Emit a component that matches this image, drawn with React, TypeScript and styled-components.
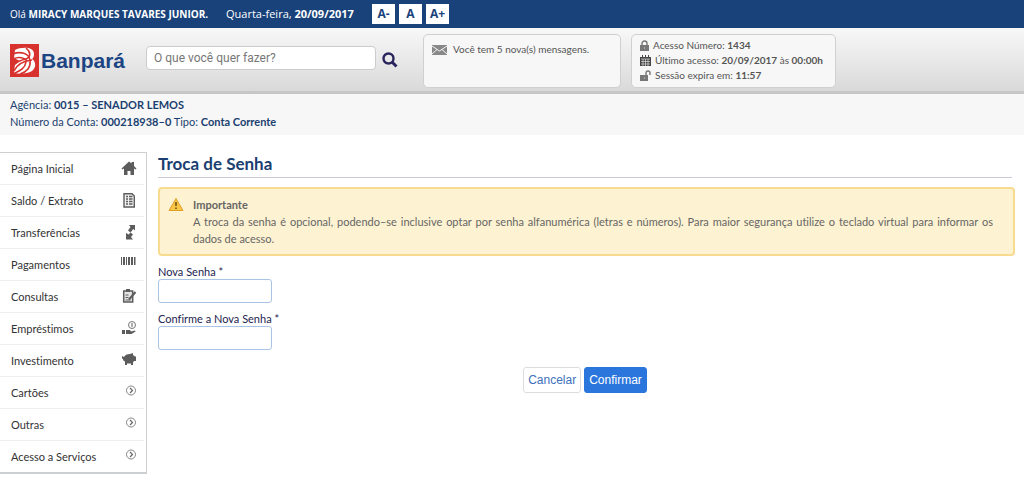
import React from "react";
import styled, { createGlobalStyle } from "styled-components";

const Global = createGlobalStyle`
  *, *::before, *::after { box-sizing: border-box; }
  body {
    margin: 0;
    background: #fff;
    color: #444;
    font: 11px/16px Lato, "Open Sans", sans-serif;
    font-variant-ligatures: none;
  }
  h1, p, ul { margin: 0; padding: 0; }
  ul { list-style: none; }
  svg { display: block; flex: none; }
`;

const TopBar = styled.div`
  display: flex;
  align-items: center;
  height: 28px;
  padding: 0 10px;
  color: #fff;
  background: #19427a;
  font-family: "Open Sans", sans-serif;
`;
const Greeting = styled.span`
  width: 216px;
  white-space: nowrap;
  font-size: 10px;
`;
const Today = styled.span`
  width: 146px;
  white-space: nowrap;
`;
const FontSizes = styled.div`
  display: flex;
  gap: 4px;
`;
const FontButton = styled.button`
  width: 23px;
  height: 20px;
  padding: 0;
  border: 0;
  background: #fff;
  color: #19427a;
  font: bold 12px/20px "Open Sans", sans-serif;
`;

const Header = styled.header`
  display: flex;
  align-items: flex-start;
  height: 66px;
  padding: 6px 10px 0;
  border-bottom: 3px solid #c6c6c6;
  background: linear-gradient(#f8f8f8, #d9d9d9);
`;
const Logo = styled.a`
  display: flex;
  align-items: center;
  gap: 2px;
  width: 136px;
  padding-top: 10px;
  color: #1c4583;
  text-decoration: none;
`;
const LogoName = styled.span`
  font: bold 21px/32px "Liberation Sans", sans-serif;
`;
const Search = styled.form`
  display: flex;
  align-items: center;
  gap: 6px;
  width: 277px;
  padding-top: 12px;
`;
const SearchInput = styled.input`
  width: 230px;
  height: 24px;
  padding: 0 7px;
  border: 1px solid #ccc;
  border-radius: 4px;
  background: #fff;
  font: 12px Roboto, sans-serif;
  &::placeholder { color: #777; opacity: 1; }
`;
const IconButton = styled.button`
  padding: 4px 0 0;
  border: 0;
  background: none;
`;
const Card = styled.section<{ $width: number }>`
  width: ${(p) => p.$width}px;
  height: 54px;
  margin-right: 10px;
  padding: 3px 8px;
  border: 1px solid #d0d0d0;
  border-radius: 5px;
  background: #f7f7f7;
  color: #555;
  font-size: 10px;
`;
const CardLine = styled.p`
  display: flex;
  align-items: center;
  gap: 4px;
  line-height: 15px;
  white-space: pre;
`;
const MailLine = styled(CardLine)`
  gap: 6px;
  padding-top: 4px;
`;

const Account = styled.section`
  height: 41px;
  padding: 2px 10px;
  background: #f7f7f7;
  color: #1b3f70;
  line-height: 17px;
`;

const Body = styled.div`
  display: flex;
  align-items: flex-start;
  padding-top: 17px;
`;
const Sidebar = styled.nav`
  flex: none;
  width: 147px;
  border: solid #ccd0d2;
  border-width: 1px 1px 2px 0;
`;
const MenuItem = styled.li`
  margin-right: 2px;
  & + & { border-top: 1px solid #eee; }
`;
const MenuLink = styled.a`
  display: flex;
  justify-content: space-between;
  align-items: center;
  height: 31px;
  padding: 0 7px 0 11px;
  color: #333;
  text-decoration: none;
`;
const MenuIcon = styled.svg`
  width: 16px;
  height: 16px;
  margin-bottom: 2px;
`;
const Main = styled.main`
  flex: 1;
  min-width: 0;
  padding: 0 9px 0 11px;
`;
const Title = styled.h1`
  height: 26px;
  margin-right: 3px;
  border-bottom: 1px solid #c9ccd6;
  color: #1b3f70;
  font-size: 17px;
  line-height: 24px;
`;
const Notice = styled.section`
  display: flex;
  gap: 9px;
  margin: 9px 0 8px;
  padding: 8px 20px 7px 8px;
  border: 2px solid #f7dc8f;
  border-radius: 4px;
  background: #fdf2d1;
  color: #666;
`;
const NoticeText = styled.div`
  flex: 1;
  text-align: justify;
  p { line-height: 17px; }
`;
const Field = styled.div`
  display: flex;
  flex-direction: column;
  align-items: flex-start;
  margin-bottom: 8px;
`;
const Label = styled.label`
  color: #1d2450;
  line-height: 15px;
`;
const Password = styled.input`
  width: 114px;
  height: 24px;
  border: 1px solid #a9c4e4;
  border-radius: 3px;
  background: #fff;
`;
const Actions = styled.div`
  display: flex;
  justify-content: center;
  gap: 3px;
  padding: 9px 3px 0 0;
`;
const Button = styled.button<{ $primary?: boolean }>`
  height: 26px;
  padding: 0 4px;
  border: 1px solid ${(p) => (p.$primary ? "#2a76dd" : "#ddd")};
  border-radius: 3px;
  background: ${(p) => (p.$primary ? "#2a76dd" : "#fff")};
  color: ${(p) => (p.$primary ? "#fff" : "#3d71bb")};
  font: 12px "Liberation Sans", Arial, sans-serif;
`;

const LogoMark = () => (
  <svg width="29" height="33" viewBox="0 0 29 33">
    <path fill="#d8322e" d="M0 0h29v33H0z" />
    <path fill="#fff" d="M5 6C11 3 24 2 24 10c0 3-1 4-2 5 5 3 4 11-2 13-5 2-11 2-16 1l1-9 5-3-6-3z" />
    <g fill="none" stroke="#d8322e" strokeWidth="1.6">
      <path d="M3 10c7-3 16-1 17 6" />
      <path d="M3 15c6-3 12-1 14 2" />
      <path d="M16 4c5 4 5 9 0 11-5 1-9 2-13 7" />
      <path d="M4 27c3-7 9-10 18-11" />
      <path d="M10 30c7-2 11-7 10-13" />
      <path d="M3 30c6-3 12-5 13-12" />
    </g>
  </svg>
);

const SearchIcon = () => (
  <svg width="16" height="16" viewBox="0 0 16 16" fill="none" stroke="#29255c">
    <circle cx="6.5" cy="6.5" r="5" strokeWidth="2.4" />
    <path d="M10 10l4.5 4.5" strokeWidth="3" />
  </svg>
);

const MailIcon = () => (
  <svg width="15" height="10" viewBox="0 0 15 10">
    <path fill="#888" d="M0 0h15v10H0z" />
    <path d="M0 1l7.5 5L15 1M0 9l5-4.500M15 9l-5-4.500" fill="none" stroke="#f7f7f7" />
  </svg>
);

const LockIcon = ({ open }: { open?: boolean }) => (
  <svg width={open ? 11 : 9} height="11" viewBox={open ? "0 0 11 11" : "0 0 9 11"}>
    <path
      d={open ? "M6 6V3a2 2 0 0 1 4 0v2" : "M2 5V3.500a2.500 2.500 0 0 1 5 0V5"}
      fill="none"
      stroke="#777"
      strokeWidth="1.4"
    />
    <path fill="#777" d={open ? "M0 5h8v6H0z" : "M0 5h9v6H0z"} />
    <path fill="#aaa" d="M4 7h1v2H4z" />
  </svg>
);

const CalendarIcon = () => (
  <svg width="11" height="12" viewBox="0 0 11 12">
    <path fill="#444" d="M0 2h11v9H0zM2 0h1v2H2zM5 0h1v2H5zM8 0h1v2H8z" />
    <path stroke="#ddd" strokeWidth=".7" d="M1 4h9M1 6.500h9M1 9h9M3 4v7M5.500 4v7M8 4v7" />
  </svg>
);

const WarningIcon = () => (
  <svg width="16" height="15" viewBox="0 0 16 15">
    <path d="M8 1.500l7 12H1z" fill="#f8c544" stroke="#e0a02c" strokeLinejoin="round" />
    <path d="M8 5v4M8 10.500V12" stroke="#6b4a13" strokeWidth="1.500" />
  </svg>
);

const G = "#5c5c5c";
const icons: Record<string, React.ReactNode> = {
  home: (
    <path fill={G} d="M8 1.500l2.500 2V2h2.500v4L15.500 8.500l-1 1L13 8.500V15H9.500v-4h-3v4H3V8.500L1.500 9.500l-1-1z" />
  ),
  sheet: (
    <>
      <path d="M3 1.700h8l2.300 2.300v11H3z" fill="#f2f2f2" stroke={G} strokeWidth="1.400" />
      <path d="M5 4.500h2M8 4.500h3.500M5 7h2M8 7h3.500M5 9.500h2M8 9.500h3.500M5 12h2M8 12h3.500" stroke={G} strokeWidth="1.300" />
    </>
  ),
  transfer: (
    <path fill={G} d="M8 1h6v5.500l-1.700-1.500L9.500 8.500 7 6.500 9.500 3zM6 9.500l1.500 1L9.500 8.500l2.500 2-2 2.500 2 2.500H5V9z" />
  ),
  barcode: (
    <path fill={G} d="M0 1h1v8H0zM2 1h2v8H2zM5 1h1v8H5zM7 1h2v8H7zM10 1h2v8h-2zM13 1h1v8h-1zM14.500 1h.5v8h-.5z" />
  ),
  clipboard: (
    <>
      <path d="M2.700 3h9v11h-9z" fill="#e4e4e4" stroke={G} strokeWidth="1.500" />
      <path fill={G} d="M5 1h4v3H5z" />
      <path d="M4.500 7h3M4.500 9.500h3M4.500 12h5" stroke={G} />
      <path d="M14.500 4L8 11.500" stroke={G} strokeWidth="2" />
    </>
  ),
  loan: (
    <>
      <circle cx="11" cy="5" r="3.500" fill="none" stroke="#777" />
      <path d="M11 3v4" stroke={G} />
      <path fill={G} d="M1 10h3v4H1zM5 10h4l1 1.500 4-1 .5 1-4 2.500H5z" />
    </>
  ),
  piggy: (
    <path fill={G} d="M1 4l2 1c1-2 3-3 6-3l3-1v2l2 1.500h1V9h-2l-1 1.500V13h-2v-1.500H6V13H4V9.500C2.500 9 2 8 2 7L1 6.500z" />
  ),
  arrow: (
    <>
      <circle cx="10" cy="6.500" r="4.500" fill="none" stroke="#888" />
      <path d="M9 4l2.500 2.500L9 9" fill="none" stroke="#666" strokeWidth="1.200" />
    </>
  ),
};

const menu: [string, string][] = [
  ["Página Inicial", "home"],
  ["Saldo / Extrato", "sheet"],
  ["Transferências", "transfer"],
  ["Pagamentos", "barcode"],
  ["Consultas", "clipboard"],
  ["Empréstimos", "loan"],
  ["Investimento", "piggy"],
  ["Cartões", "arrow"],
  ["Outras", "arrow"],
  ["Acesso a Serviços", "arrow"],
];

export default function App() {
  return (
    <>
      <Global />
      <TopBar>
        <Greeting>
          Olá <b>MIRACY MARQUES TAVARES JUNIOR.</b>
        </Greeting>
        <Today>
          Quarta-feira, <b>20/09/2017</b>
        </Today>
        <FontSizes>
          <FontButton type="button">A-</FontButton>
          <FontButton type="button">A</FontButton>
          <FontButton type="button">A+</FontButton>
        </FontSizes>
      </TopBar>
      <Header>
        <Logo href="#">
          <LogoMark />
          <LogoName>Banpará</LogoName>
        </Logo>
        <Search>
          <SearchInput aria-label="Pesquisar" placeholder="O que você quer fazer?" />
          <IconButton type="button" aria-label="Buscar">
            <SearchIcon />
          </IconButton>
        </Search>
        <Card $width={198}>
          <MailLine>
            <MailIcon />
            Você tem 5 nova(s) mensagens.
          </MailLine>
        </Card>
        <Card $width={205}>
          <CardLine>
            <LockIcon />
            <span>Acesso Número: <b>1434</b></span>
          </CardLine>
          <CardLine>
            <CalendarIcon />
            <span>Último acesso: <b>20/09/2017</b> às <b>00:00h</b></span>
          </CardLine>
          <CardLine>
            <LockIcon open />
            <span>Sessão expira em: <b>11:57</b></span>
          </CardLine>
        </Card>
      </Header>
      <Account>
        <p>Agência: <b>0015 – SENADOR LEMOS</b></p>
        <p>Número da Conta: <b>000218938–0</b> Tipo: <b>Conta Corrente</b></p>
      </Account>
      <Body>
        <Sidebar>
          <ul>
            {menu.map(([label, icon]) => (
              <MenuItem key={label}>
                <MenuLink href="#">
                  {label}
                  <MenuIcon viewBox="0 0 16 16">{icons[icon]}</MenuIcon>
                </MenuLink>
              </MenuItem>
            ))}
          </ul>
        </Sidebar>
        <Main>
          <Title>Troca de Senha</Title>
          <Notice>
            <WarningIcon />
            <NoticeText>
              <b>Importante</b>
              <p>
                A troca da senha é opcional, podendo–se inclusive optar por senha alfanumérica (letras e
                números). Para maior segurança utilize o teclado virtual para informar os dados de acesso.
              </p>
            </NoticeText>
          </Notice>
          <Field>
            <Label htmlFor="nova">Nova Senha *</Label>
            <Password id="nova" type="password" />
          </Field>
          <Field>
            <Label htmlFor="confirma">Confirme a Nova Senha *</Label>
            <Password id="confirma" type="password" />
          </Field>
          <Actions>
            <Button type="button">Cancelar</Button>
            <Button type="button" $primary>Confirmar</Button>
          </Actions>
        </Main>
      </Body>
    </>
  );
}
